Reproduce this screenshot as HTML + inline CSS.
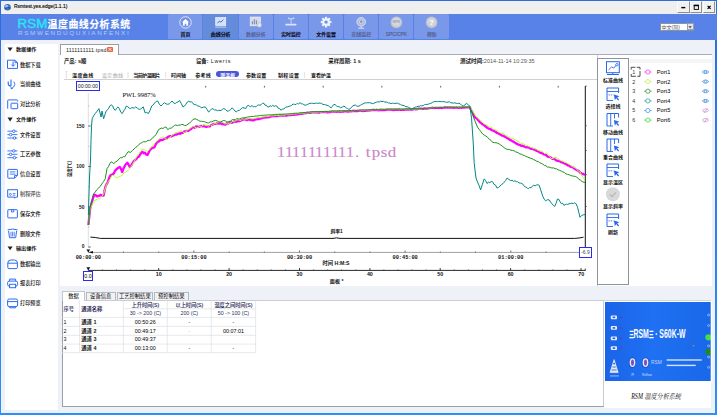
<!DOCTYPE html>
<html lang="zh-CN"><head><meta charset="utf-8"><title>RSM温度曲线分析系统</title>
<style>
html,body{margin:0;padding:0}
body{width:717px;height:415px;overflow:hidden;position:relative;background:#eef2f8;font-family:"Liberation Sans","Noto Sans CJK SC",sans-serif;}
.t{position:absolute;white-space:nowrap;}
svg{position:absolute;left:0;top:0;overflow:visible}
</style></head><body>

<div style="position:absolute;left:0px;top:0px;width:717px;height:415px;background:linear-gradient(180deg,#2a6be0,#2c7cec 40%,#2b90f8);"></div>
<div style="position:absolute;left:1.1px;top:1px;width:714.3px;height:412.3px;background:#eef2f8;"></div>
<div style="position:absolute;left:1.1px;top:412.7px;width:714.3px;height:0.6px;background:#fafcff;"></div>
<div style="position:absolute;left:1.1px;top:1px;width:714.9px;height:12.8px;background:#efefef;"></div>
<svg width="717" height="415" viewBox="0 0 717 415"><circle cx="7.5" cy="7.3" r="3.3" fill="#3d6fc4"/><circle cx="6.6" cy="6.3" r="1.6" fill="#9cc3ee"/><path d="M4.6 8.6 Q7.5 6.5 10.6 8.2" stroke="#1d3f7a" stroke-width=".8" fill="none"/></svg>
<div class="t" style="left:14px;top:3.4px;font-size:4.9px;line-height:8px;color:#000;font-weight:normal;-webkit-text-stroke:.12px #000;">Rsmtest.yes.edge(1.1.1)</div>
<div style="position:absolute;left:677.2px;top:1px;width:12.4px;height:12.3px;background:#f1f1f1;border:0.6px solid;border-color:#fbfbfb #8e8e8e #8e8e8e #fbfbfb;box-sizing:border-box;"></div>
<div style="position:absolute;left:690px;top:1px;width:12.4px;height:12.3px;background:#f1f1f1;border:0.6px solid;border-color:#fbfbfb #8e8e8e #8e8e8e #fbfbfb;box-sizing:border-box;"></div>
<div style="position:absolute;left:702.8px;top:1px;width:12.6px;height:12.3px;background:#f1f1f1;border:0.6px solid;border-color:#fbfbfb #8e8e8e #8e8e8e #fbfbfb;box-sizing:border-box;"></div>
<svg width="717" height="415" viewBox="0 0 717 415"><rect x="681.3" y="6.9" width="4" height="1.4" fill="#000"/><rect x="694.2" y="5.4" width="4.2" height="4" fill="none" stroke="#000" stroke-width=".9"/><rect x="693.75" y="4.7" width="5.1" height="1.5" fill="#000"/><path d="M707.6 5.8l3 3M710.6 5.8l-3 3" stroke="#000" stroke-width="1.2"/></svg>
<div style="position:absolute;left:1.1px;top:13.8px;width:715.9px;height:25.9px;background:#5882e8;"></div>
<div class="t" style="left:17.4px;top:18.1px;font-size:13.3px;line-height:12px;color:#27e6f7;font-weight:normal;letter-spacing:0.15px;-webkit-text-stroke:.4px #27e6f7;">RSM</div>
<div class="t" style="left:47.6px;top:18.5px;font-size:9.9px;line-height:12px;color:#fff;font-weight:bold;letter-spacing:0.52px;-webkit-text-stroke:.15px #fff;">温度曲线分析系统</div>
<div class="t" style="left:18.4px;top:29.9px;font-size:5px;line-height:6px;color:#b4caf6;font-weight:normal;letter-spacing:1.35px;transform:scaleX(1.255);transform-origin:0 50%;">RSMWENDUQUXIANFENXI</div>
<div style="position:absolute;left:168.3px;top:14.4px;width:34.2px;height:25px;background:#7a98e9;border-radius:1.6px;"></div>
<div class="t" style="left:185.5px;width:0;display:flex;justify-content:center;top:30.6px;font-size:4.9px;line-height:8px;color:#05050f;font-weight:normal;-webkit-text-stroke:.2px #05050f;"><span style="white-space:nowrap;flex:none">首页</span></div>
<div style="position:absolute;left:203.45px;top:14.4px;width:34.2px;height:25px;background:#648cda;border-radius:1.6px;"></div>
<div class="t" style="left:220.65px;width:0;display:flex;justify-content:center;top:30.6px;font-size:4.9px;line-height:8px;color:#05050f;font-weight:normal;-webkit-text-stroke:.2px #05050f;"><span style="white-space:nowrap;flex:none">曲线分析</span></div>
<div style="position:absolute;left:238.6px;top:14.4px;width:34.2px;height:25px;background:#7a98e9;border-radius:1.6px;"></div>
<div class="t" style="left:255.8px;width:0;display:flex;justify-content:center;top:30.6px;font-size:4.9px;line-height:8px;color:#505c8c;font-weight:normal;-webkit-text-stroke:.15px #505c8c;"><span style="white-space:nowrap;flex:none">数据分析</span></div>
<div style="position:absolute;left:273.75px;top:14.4px;width:34.2px;height:25px;background:#7a98e9;border-radius:1.6px;"></div>
<div class="t" style="left:290.95px;width:0;display:flex;justify-content:center;top:30.6px;font-size:4.9px;line-height:8px;color:#05050f;font-weight:normal;-webkit-text-stroke:.2px #05050f;"><span style="white-space:nowrap;flex:none">实时监控</span></div>
<div style="position:absolute;left:308.9px;top:14.4px;width:34.2px;height:25px;background:#7a98e9;border-radius:1.6px;"></div>
<div class="t" style="left:326.1px;width:0;display:flex;justify-content:center;top:30.6px;font-size:4.9px;line-height:8px;color:#05050f;font-weight:normal;-webkit-text-stroke:.2px #05050f;"><span style="white-space:nowrap;flex:none">文件设置</span></div>
<div style="position:absolute;left:344.05px;top:14.4px;width:34.2px;height:25px;background:#7a98e9;border-radius:1.6px;"></div>
<div class="t" style="left:361.25px;width:0;display:flex;justify-content:center;top:30.6px;font-size:4.9px;line-height:8px;color:#505c8c;font-weight:normal;-webkit-text-stroke:.15px #505c8c;"><span style="white-space:nowrap;flex:none">在线监控</span></div>
<div style="position:absolute;left:379.2px;top:14.4px;width:34.2px;height:25px;background:#7a98e9;border-radius:1.6px;"></div>
<div class="t" style="left:396.4px;width:0;display:flex;justify-content:center;top:30.6px;font-size:4.9px;line-height:8px;color:#505c8c;font-weight:normal;-webkit-text-stroke:.15px #505c8c;"><span style="white-space:nowrap;flex:none">SPC/CPK</span></div>
<div style="position:absolute;left:414.35px;top:14.4px;width:34.2px;height:25px;background:#7a98e9;border-radius:1.6px;"></div>
<div class="t" style="left:431.55px;width:0;display:flex;justify-content:center;top:30.6px;font-size:4.9px;line-height:8px;color:#505c8c;font-weight:normal;-webkit-text-stroke:.15px #505c8c;"><span style="white-space:nowrap;flex:none">帮助</span></div>
<svg width="717" height="415" viewBox="0 0 717 415"><circle cx="185.5" cy="22.4" r="5.7" fill="#7190e6" stroke="#fff" stroke-width=".75"/><path d="M182 22.3l3.5-3.2 3.5 3.2h-.9v3.4h-1.8v-2h-1.6v2h-1.8v-3.4z" fill="#fff"/><rect x="215.7" y="17.6" width="10" height="7.8" fill="#d3e2fb" stroke="#eef3fd" stroke-width=".7"/><path d="M217.5 23.2l1.8-2 1.6 1 2.4-2.6" stroke="#3a5fb4" stroke-width=".9" fill="none"/><rect x="215.2" y="26.7" width="10.8" height=".7" fill="#f2f6fd"/><rect x="250.2" y="17" width="10.4" height="8.8" fill="#d6dceb" stroke="#e6ebf5" stroke-width=".7"/><path d="M252.4 24.2v-3M254.4 24.2v-5M256.4 24.2v-4" stroke="#7f8cab" stroke-width="1.1"/><circle cx="259.4" cy="25" r="2.3" fill="#dfe4ef" stroke="#a3adc6" stroke-width=".5"/><path d="M286.1 24.6h9.6" stroke="#dbe4f8" stroke-width="1.7" stroke-linecap="round"/><path d="M291.1 23.6v-5M288.9 18.8h4.4" stroke="#dbe4f8" stroke-width=".8" fill="none"/><circle cx="288.8" cy="18.3" r=".8" fill="#dbe4f8"/><circle cx="293.6" cy="18.3" r=".8" fill="#dbe4f8"/><g transform="translate(326.1 22.1)"><rect x="-1.05" y="-5.3" width="2.1" height="3" fill="#eef3fd" transform="rotate(0)"/><rect x="-1.05" y="-5.3" width="2.1" height="3" fill="#eef3fd" transform="rotate(45)"/><rect x="-1.05" y="-5.3" width="2.1" height="3" fill="#eef3fd" transform="rotate(90)"/><rect x="-1.05" y="-5.3" width="2.1" height="3" fill="#eef3fd" transform="rotate(135)"/><rect x="-1.05" y="-5.3" width="2.1" height="3" fill="#eef3fd" transform="rotate(180)"/><rect x="-1.05" y="-5.3" width="2.1" height="3" fill="#eef3fd" transform="rotate(225)"/><rect x="-1.05" y="-5.3" width="2.1" height="3" fill="#eef3fd" transform="rotate(270)"/><rect x="-1.05" y="-5.3" width="2.1" height="3" fill="#eef3fd" transform="rotate(315)"/><circle r="3.8" fill="#eef3fd"/><circle r="1.7" fill="#6f8fe4"/></g><circle cx="361.2" cy="21.8" r="4.3" fill="#aebbdc" stroke="#dde4f2" stroke-width=".9"/><circle cx="361.2" cy="21.6" r="1.9" fill="#8d9cc4" stroke="#dfe5f2" stroke-width=".7"/><path d="M361.2 26.2v1.6M358.2 28.2h6" stroke="#dde4f2" stroke-width="1"/><circle cx="396.4" cy="22.4" r="5.8" fill="#bfc4cf"/><circle cx="396.4" cy="22" r="4.6" fill="#d3d6dd"/><circle cx="431.6" cy="22.4" r="5.8" fill="#bcc1cc"/><circle cx="431.6" cy="22.1" r="4.7" fill="#cfd2da"/></svg>
<div class="t" style="left:396.4px;width:0;display:flex;justify-content:center;top:20.1px;font-size:3.8px;line-height:5px;color:#9aa0ad;font-weight:bold;"><span style="white-space:nowrap;flex:none">SPK</span></div>
<div class="t" style="left:431.55px;width:0;display:flex;justify-content:center;top:18.9px;font-size:7.5px;line-height:8px;color:#fff;font-weight:bold;"><span style="white-space:nowrap;flex:none">?</span></div>
<div style="position:absolute;left:659.6px;top:22.6px;width:34.8px;height:8.6px;background:#fff;border:0.6px solid #8a93a5;box-sizing:border-box;"></div>
<div style="position:absolute;left:686.6px;top:23.4px;width:7px;height:7px;background:#e4e6ea;border:0.5px solid #9aa0aa;box-sizing:border-box;"></div>
<div class="t" style="left:661.5px;top:23px;font-size:5px;line-height:8px;color:#555;font-weight:normal;">中文(简)</div>
<svg width="717" height="415" viewBox="0 0 717 415"><path d="M688.4 26.2h3.4l-1.7 2z" fill="#444"/></svg>
<div style="position:absolute;left:4.8px;top:43.7px;width:53.5px;height:366.3px;background:#fff;"></div>
<svg width="717" height="415" viewBox="0 0 717 415"><path d="M7.5 47.5h5.2l-2.6 3.8z" fill="#222"/><g transform="translate(6.8 59.3)"><path d="M.7 .9h7.5l2.5 2.5v5.7H.7z M8.2 .9v2.5h2.5" fill="none" stroke="#2c6cf0" stroke-width="1"/><path d="M6.3 2.2v4.6M4.5 5.2l1.8 1.8 1.8-1.8" fill="none" stroke="#2c6cf0" stroke-width="1"/></g><g transform="translate(6.8 79.2)"><path d="M4.2 .4v6.4M1.4 2.4v2q0 2.6 2.8 2.6" fill="none" stroke="#2c6cf0" stroke-width="1.1"/><path d="M7 2.4q2.4 2.6-.2 5.4l-2.4 1.6M4.4 7.8l-.2 1.7 1.8-.1" fill="none" stroke="#2c6cf0" stroke-width=".9"/></g><g transform="translate(6.8 99)"><path d="M.9 9.7V1.7q0-.8.8-.8h8.4q.8 0 .8.8v.8" fill="none" stroke="#2c6cf0" stroke-width="1"/><rect x="4.2" y="4.2" width="6.7" height="5.5" rx=".6" fill="none" stroke="#2c6cf0" stroke-width="1"/></g><path d="M7.5 117.6h5.2l-2.6 3.8z" fill="#222"/><g transform="translate(6.8 129.4)"><path d="M.6 1.8h10M.6 5.2h10M.6 8.6h10" stroke="#2c6cf0" stroke-width=".9"/><circle cx="7" cy="1.8" r="1.3" fill="#fff" stroke="#2c6cf0" stroke-width=".9"/><circle cx="3.8" cy="5.2" r="1.3" fill="#fff" stroke="#2c6cf0" stroke-width=".9"/><circle cx="7.6" cy="8.6" r="1.3" fill="#fff" stroke="#2c6cf0" stroke-width=".9"/></g><g transform="translate(6.8 149.1)"><path d="M.6 1.8h10M.6 5.2h10M.6 8.6h10" stroke="#2c6cf0" stroke-width=".9"/><circle cx="7" cy="1.8" r="1.3" fill="#fff" stroke="#2c6cf0" stroke-width=".9"/><circle cx="3.8" cy="5.2" r="1.3" fill="#fff" stroke="#2c6cf0" stroke-width=".9"/><circle cx="7.6" cy="8.6" r="1.3" fill="#fff" stroke="#2c6cf0" stroke-width=".9"/></g><g transform="translate(6.8 168.6)"><path d="M1 1.4q0-.6.6-.6h8.4q.6 0 .6.6v5.4l-2.8 2.8H1.6q-.6 0-.6-.6z M10.6 6.8h-2.8v2.8" fill="none" stroke="#2c6cf0" stroke-width="1"/><path d="M3 3.3h5.6M3 5.5h5.6" stroke="#2c6cf0" stroke-width=".9"/></g><g transform="translate(6.8 188.6)"><path d="M.9 1.1h9.8v7.4h-1.6l-1.2 1.1v-1.1H.9z" fill="none" stroke="#2c6cf0" stroke-width="1"/><circle cx="3.6" cy="5.8" r="1" fill="none" stroke="#2c6cf0" stroke-width=".8"/><path d="M6 5h2.6M6 6.6h2.6" stroke="#2c6cf0" stroke-width=".8"/></g><g transform="translate(6.8 208.5)"><rect x="1" y="1.2" width="9.6" height="8.2" rx=".5" fill="none" stroke="#2c6cf0" stroke-width="1"/><rect x="4.6" y="1.2" width="2.4" height="2.2" fill="none" stroke="#2c6cf0" stroke-width=".8"/></g><g transform="translate(6.8 228.3)"><path d="M.8 1.6q5-1.6 10 0" fill="none" stroke="#2c6cf0" stroke-width="1"/><path d="M1.8 2.6l.9 6.8h6.2l.9-6.8" fill="none" stroke="#2c6cf0" stroke-width="1"/><path d="M4.2 3.4v4.8M5.8 3.4v4.8M7.4 3.4v4.8" stroke="#2c6cf0" stroke-width=".8"/></g><path d="M7.5 246.5h5.2l-2.6 3.8z" fill="#222"/><g transform="translate(6.8 259)"><path d="M1 4q0-3 3-3h3.6q3 0 3 3v4.4q0 1.2-1.2 1.2H2.2q-1.2 0-1.2-1.2z" fill="none" stroke="#2c6cf0" stroke-width="1"/><path d="M1 4.2h9.6" stroke="#2c6cf0" stroke-width="1"/></g><g transform="translate(6.8 278.1)"><path d="M2.8 3V1h6v2" fill="none" stroke="#2c6cf0" stroke-width="1"/><rect x=".8" y="3" width="10" height="5" rx="1.6" fill="none" stroke="#2c6cf0" stroke-width="1"/><rect x="2.8" y="6.2" width="6" height="3.4" fill="#fff" stroke="#2c6cf0" stroke-width="1"/></g><g transform="translate(6.8 297.6)"><rect x=".8" y="1.4" width="10" height="7.6" rx="1.6" fill="none" stroke="#2c6cf0" stroke-width="1"/><path d="M.8 4h10" stroke="#2c6cf0" stroke-width="1"/><path d="M2.8 9v1.2h6V9" fill="none" stroke="#2c6cf0" stroke-width="1"/></g></svg>
<div class="t" style="left:16px;top:45.3px;font-size:5.1px;line-height:8px;color:#111;font-weight:bold;">数据操作</div>
<div class="t" style="left:20px;top:60.5px;font-size:5.15px;line-height:8px;color:#000;font-weight:normal;-webkit-text-stroke:.07px #000;">数据下载</div>
<div class="t" style="left:20px;top:80.4px;font-size:5.15px;line-height:8px;color:#000;font-weight:normal;-webkit-text-stroke:.07px #000;">当前曲线</div>
<div class="t" style="left:20px;top:100.2px;font-size:5.15px;line-height:8px;color:#000;font-weight:normal;-webkit-text-stroke:.07px #000;">对比分析</div>
<div class="t" style="left:16px;top:115.4px;font-size:5.1px;line-height:8px;color:#111;font-weight:bold;">文件操作</div>
<div class="t" style="left:20px;top:130.6px;font-size:5.15px;line-height:8px;color:#000;font-weight:normal;-webkit-text-stroke:.07px #000;">文件设置</div>
<div class="t" style="left:20px;top:150.3px;font-size:5.15px;line-height:8px;color:#000;font-weight:normal;-webkit-text-stroke:.07px #000;">工艺参数</div>
<div class="t" style="left:20px;top:169.8px;font-size:5.15px;line-height:8px;color:#000;font-weight:normal;-webkit-text-stroke:.07px #000;">信息设置</div>
<div class="t" style="left:20px;top:189.8px;font-size:5.15px;line-height:8px;color:#666;font-weight:normal;-webkit-text-stroke:.07px #000;">制程评估</div>
<div class="t" style="left:20px;top:209.7px;font-size:5.15px;line-height:8px;color:#000;font-weight:normal;-webkit-text-stroke:.07px #000;">保存文件</div>
<div class="t" style="left:20px;top:229.5px;font-size:5.15px;line-height:8px;color:#000;font-weight:normal;-webkit-text-stroke:.07px #000;">删除文件</div>
<div class="t" style="left:16px;top:244.3px;font-size:5.1px;line-height:8px;color:#111;font-weight:bold;">输出操作</div>
<div class="t" style="left:20px;top:260.2px;font-size:5.15px;line-height:8px;color:#000;font-weight:normal;-webkit-text-stroke:.07px #000;">数据输出</div>
<div class="t" style="left:20px;top:279.3px;font-size:5.15px;line-height:8px;color:#000;font-weight:normal;-webkit-text-stroke:.07px #000;">报表打印</div>
<div class="t" style="left:20px;top:298.8px;font-size:5.15px;line-height:8px;color:#000;font-weight:normal;-webkit-text-stroke:.07px #000;">打印预览</div>
<div style="position:absolute;left:60px;top:54.4px;width:652px;height:0.8px;background:#a9adb5;"></div>
<div style="position:absolute;left:60px;top:44.2px;width:58.8px;height:11px;background:#fff;border:0.7px solid #9a9ea6;border-bottom:none;box-sizing:border-box;"></div>
<div class="t" style="left:66px;top:45.6px;font-size:5.3px;line-height:8px;color:#222;font-weight:normal;letter-spacing:0.22px;">1111111111.tpsd</div>
<div style="position:absolute;left:107.3px;top:46.8px;width:5.4px;height:5.4px;background:#e9663f;border-radius:.8px;"></div>
<svg width="717" height="415" viewBox="0 0 717 415"><path d="M108.6 48.1l2.8 2.8M111.4 48.1l-2.8 2.8" stroke="#fff" stroke-width=".9"/></svg>
<div style="position:absolute;left:60px;top:55.2px;width:537.3px;height:231.3px;background:#fff;"></div>
<div style="position:absolute;left:597px;top:55.2px;width:0.7px;height:231.3px;background:#c9cdd4;"></div>
<div class="t" style="left:63.9px;top:57.3px;font-size:5.4px;line-height:8px;color:#111;font-weight:bold;">产品: s顺</div>
<div class="t" style="left:195.9px;top:57.3px;font-size:5.4px;line-height:8px;color:#111;font-weight:bold;">设备:<span style="font-weight:normal;letter-spacing:.75px;color:#222"> Lwerts</span></div>
<div class="t" style="left:328.3px;top:57.3px;font-size:5.4px;line-height:8px;color:#111;font-weight:bold;">采样周期: 1 s</div>
<div class="t" style="left:460px;top:57.3px;font-size:5.5px;line-height:8px;color:#555;font-weight:normal;"><b style="color:#111">测试时间:</b>2014-11-14 10:29:35</div>
<div class="t" style="left:72px;top:70.9px;font-size:5px;line-height:8px;color:#111;font-weight:bold;letter-spacing:0.43px;">温度曲线</div>
<div class="t" style="left:102px;top:70.9px;font-size:5px;line-height:8px;color:#a5a5a5;font-weight:normal;letter-spacing:0.37px;">设定曲线</div>
<div class="t" style="left:133.3px;top:70.9px;font-size:5px;line-height:8px;color:#111;font-weight:bold;letter-spacing:-0.6px;">当前炉温图片</div>
<div class="t" style="left:171px;top:70.9px;font-size:5px;line-height:8px;color:#111;font-weight:bold;letter-spacing:0px;">时间轴</div>
<div class="t" style="left:195.2px;top:70.9px;font-size:5px;line-height:8px;color:#111;font-weight:bold;letter-spacing:0.32px;">参考线</div>
<div class="t" style="left:246px;top:70.9px;font-size:5px;line-height:8px;color:#111;font-weight:bold;letter-spacing:0.11px;">参数设置</div>
<div class="t" style="left:277.9px;top:70.9px;font-size:5px;line-height:8px;color:#111;font-weight:bold;letter-spacing:0.37px;">制程设置</div>
<div class="t" style="left:311px;top:70.9px;font-size:5px;line-height:8px;color:#111;font-weight:bold;letter-spacing:-0.11px;">查看炉温</div>
<div style="position:absolute;left:216.2px;top:71.4px;width:23px;height:6.1px;background:#4a55d8;border-radius:3.1px;"></div>
<div class="t" style="left:227.7px;width:0;display:flex;justify-content:center;top:70.9px;font-size:5px;line-height:8px;color:#fff;font-weight:bold;letter-spacing:.2px;"><span style="white-space:nowrap;flex:none">测温板</span></div>
<svg width="717" height="415" viewBox="0 0 717 415"><path d="M66.4 71v7.4" stroke="#9a9a9a" stroke-width=".7" stroke-dasharray=".7 .9"/><path d="M128 72v6" stroke="#cfcfcf" stroke-width=".6"/><path d="M165.7 72v6" stroke="#cfcfcf" stroke-width=".6"/><path d="M304.6 72v6" stroke="#cfcfcf" stroke-width=".6"/><path d="M64 79.5H597" stroke="#bdbdbd" stroke-width=".7"/></svg>
<div style="position:absolute;left:76px;top:81px;width:23.7px;height:10px;background:#fff;border:0.8px solid #2a2af0;box-sizing:border-box;"></div>
<div class="t" style="left:87.85px;width:0;display:flex;justify-content:center;top:82.1px;font-size:5.2px;line-height:8px;color:#222;font-weight:normal;"><span style="white-space:nowrap;flex:none">00:00:00</span></div>
<div class="t" style="left:122.5px;top:91px;font-size:6.45px;line-height:8px;color:#000;font-weight:normal;font-family:'Liberation Serif',serif;">PWL 9987%</div>
<div class="t" style="left:0;top:144.9px;height:16px;font-size:14px;line-height:16px;color:#c986ca;-webkit-text-stroke:.15px #c986ca;font-family:'Liberation Serif',serif;"><span style="position:absolute;left:275.8px;width:10px;text-align:center;transform:scaleX(1.15)">1</span><span style="position:absolute;left:283.5px;width:10px;text-align:center;transform:scaleX(1.15)">1</span><span style="position:absolute;left:291.2px;width:10px;text-align:center;transform:scaleX(1.15)">1</span><span style="position:absolute;left:298.9px;width:10px;text-align:center;transform:scaleX(1.15)">1</span><span style="position:absolute;left:306.6px;width:10px;text-align:center;transform:scaleX(1.15)">1</span><span style="position:absolute;left:314.3px;width:10px;text-align:center;transform:scaleX(1.15)">1</span><span style="position:absolute;left:322px;width:10px;text-align:center;transform:scaleX(1.15)">1</span><span style="position:absolute;left:329.7px;width:10px;text-align:center;transform:scaleX(1.15)">1</span><span style="position:absolute;left:337.4px;width:10px;text-align:center;transform:scaleX(1.15)">1</span><span style="position:absolute;left:345.1px;width:10px;text-align:center;transform:scaleX(1.15)">1</span><span style="position:absolute;left:352.3px;width:10px;text-align:center;transform:scaleX(1.15)">.</span><span style="position:absolute;left:362.9px;width:10px;text-align:center;transform:scaleX(1.2)">t</span><span style="position:absolute;left:371.3px;width:10px;text-align:center;transform:scaleX(1.2)">p</span><span style="position:absolute;left:378.8px;width:10px;text-align:center;transform:scaleX(1.2)">s</span><span style="position:absolute;left:387px;width:10px;text-align:center;transform:scaleX(1.2)">d</span></div>
<svg width="717" height="415" viewBox="0 0 717 415" fill="none"><path d="M88.3 93V247.5" stroke="#c8c8c8" stroke-width=".6"/><path d="M88.3 126h2.4" stroke="#333" stroke-width=".8"/><path d="M88.3 166.5h2.4" stroke="#333" stroke-width=".8"/><path d="M88.3 207h2.4" stroke="#333" stroke-width=".8"/><path d="M88.3 247h2.4" stroke="#333" stroke-width=".8"/><path d="M88.3 106h1.2" stroke="#999" stroke-width=".6"/><path d="M88.3 146.3h1.2" stroke="#999" stroke-width=".6"/><path d="M88.3 186.8h1.2" stroke="#999" stroke-width=".6"/><path d="M88.3 227h1.2" stroke="#999" stroke-width=".6"/><path d="M205.7 85.8v1.8" stroke="#222" stroke-width=".7"/><path d="M264.4 85.8v1.8" stroke="#222" stroke-width=".7"/><path d="M323.2 85.8v1.8" stroke="#222" stroke-width=".7"/><path d="M381.9 85.8v1.8" stroke="#222" stroke-width=".7"/><path d="M440.7 85.8v1.8" stroke="#222" stroke-width=".7"/><path d="M499.4 85.8v1.8" stroke="#222" stroke-width=".7"/><path d="M558.2 85.8v1.8" stroke="#222" stroke-width=".7"/><path d="M585.3 86V247.5" stroke="#111" stroke-width="1"/><path d="M585.3 86h1.6" stroke="#333" stroke-width=".6"/><path d="M585.3 125.7h1.6" stroke="#333" stroke-width=".6"/><path d="M585.3 150.5h1.6" stroke="#333" stroke-width=".6"/><path d="M585.3 174.6h1.6" stroke="#333" stroke-width=".6"/><path d="M585.3 206.5h1.6" stroke="#333" stroke-width=".6"/><path d="M90.4 237.1Q95 237.3 100.5 238.4H333Q336.5 237.3 340 238.4H574.5Q579 238.2 583.5 237.2" stroke="#111" stroke-width="1"/><path d="M88.3 252.4H585" stroke="#777" stroke-width=".7"/><path d="M88.3 250.5v1.9" stroke="#333" stroke-width=".7"/><path d="M123.5 251.5v1" stroke="#333" stroke-width=".7"/><path d="M158.8 251.5v1" stroke="#333" stroke-width=".7"/><path d="M193.9 250.5v1.9" stroke="#333" stroke-width=".7"/><path d="M229.2 251.5v1" stroke="#333" stroke-width=".7"/><path d="M264.4 251.5v1" stroke="#333" stroke-width=".7"/><path d="M299.5 250.5v1.9" stroke="#333" stroke-width=".7"/><path d="M334.8 251.5v1" stroke="#333" stroke-width=".7"/><path d="M370 251.5v1" stroke="#333" stroke-width=".7"/><path d="M405.1 250.5v1.9" stroke="#333" stroke-width=".7"/><path d="M440.4 251.5v1" stroke="#333" stroke-width=".7"/><path d="M475.5 251.5v1" stroke="#333" stroke-width=".7"/><path d="M510.8 250.5v1.9" stroke="#333" stroke-width=".7"/><path d="M546 251.5v1" stroke="#333" stroke-width=".7"/><path d="M581.1 251.5v1" stroke="#333" stroke-width=".7"/><path d="M86.4 249.6l1.9 2.6 1.9-2.6z M88.5 252.3l4.5-1.3v2.6z" fill="#111"/><path d="M88.3 270.4H585.6" stroke="#111" stroke-width=".9"/><path d="M88.3 268v2.4" stroke="#111" stroke-width=".8"/><path d="M102.4 269.3v1.1" stroke="#333" stroke-width=".6"/><path d="M116.5 269.3v1.1" stroke="#333" stroke-width=".6"/><path d="M130.6 269.3v1.1" stroke="#333" stroke-width=".6"/><path d="M144.7 269.3v1.1" stroke="#333" stroke-width=".6"/><path d="M158.7 268v2.4" stroke="#111" stroke-width=".8"/><path d="M172.8 269.3v1.1" stroke="#333" stroke-width=".6"/><path d="M186.9 269.3v1.1" stroke="#333" stroke-width=".6"/><path d="M201 269.3v1.1" stroke="#333" stroke-width=".6"/><path d="M215 269.3v1.1" stroke="#333" stroke-width=".6"/><path d="M229.1 268v2.4" stroke="#111" stroke-width=".8"/><path d="M243.2 269.3v1.1" stroke="#333" stroke-width=".6"/><path d="M257.3 269.3v1.1" stroke="#333" stroke-width=".6"/><path d="M271.3 269.3v1.1" stroke="#333" stroke-width=".6"/><path d="M285.4 269.3v1.1" stroke="#333" stroke-width=".6"/><path d="M299.5 268v2.4" stroke="#111" stroke-width=".8"/><path d="M313.6 269.3v1.1" stroke="#333" stroke-width=".6"/><path d="M327.6 269.3v1.1" stroke="#333" stroke-width=".6"/><path d="M341.7 269.3v1.1" stroke="#333" stroke-width=".6"/><path d="M355.8 269.3v1.1" stroke="#333" stroke-width=".6"/><path d="M369.9 268v2.4" stroke="#111" stroke-width=".8"/><path d="M383.9 269.3v1.1" stroke="#333" stroke-width=".6"/><path d="M398 269.3v1.1" stroke="#333" stroke-width=".6"/><path d="M412.1 269.3v1.1" stroke="#333" stroke-width=".6"/><path d="M426.2 269.3v1.1" stroke="#333" stroke-width=".6"/><path d="M440.2 268v2.4" stroke="#111" stroke-width=".8"/><path d="M454.3 269.3v1.1" stroke="#333" stroke-width=".6"/><path d="M468.4 269.3v1.1" stroke="#333" stroke-width=".6"/><path d="M482.5 269.3v1.1" stroke="#333" stroke-width=".6"/><path d="M496.6 269.3v1.1" stroke="#333" stroke-width=".6"/><path d="M510.6 268v2.4" stroke="#111" stroke-width=".8"/><path d="M524.7 269.3v1.1" stroke="#333" stroke-width=".6"/><path d="M538.8 269.3v1.1" stroke="#333" stroke-width=".6"/><path d="M552.9 269.3v1.1" stroke="#333" stroke-width=".6"/><path d="M566.9 269.3v1.1" stroke="#333" stroke-width=".6"/><path d="M581 268v2.4" stroke="#111" stroke-width=".8"/><path d="M585.3 268.6v1.8" stroke="#111" stroke-width=".8"/><path d="M86.4 267.2l1.9 3 1.9-3z" fill="#111"/><polyline points="88.4,225 90.1,209 91.8,202.3 93,198.5 94.3,194.7 95.6,195 96.9,196.4 98.2,196.2 99.4,195.6 100.8,194.9 102.2,195.7 103.6,195.6 105.3,187.1 106.5,184.4 107.8,182.1 109.1,178 110.4,175.3 112.1,174.5 113.8,173.6 115,170.8 116.3,169.4 118,168 119.7,166.9 121,168.8 122.2,172 123.9,167.7 125.6,164.5 127.3,162.7 128.6,164.7 129.8,166.9 131.1,165.7 132.3,163.5 133.6,161.4 134.9,160.1 136.1,159.3 137.4,157.6 138.7,156.8 139.9,154.8 141.2,153 142.4,151.7 143.7,153.3 144.9,152.6 146.2,154.7 147.5,155 148.8,152.2 150,150 151.4,148.6 152.9,147.7 154.3,147.4 155.9,144.1 157.6,141.5 159,141.5 160.3,140 161.7,140.1 163,139.7 164.4,139 165.6,138.3 166.8,138.1 168,136.8 169.2,136.4 170.4,136.1 171.6,136.4 172.8,135.6 174,135.1 175.2,134.6 176.4,134.6 177.7,134 178.9,133.4 180.1,133.8 181.3,133 182.7,132.8 184.1,131.5 185.5,131.5 186.9,130.8 188.3,130.9 189.7,129.7 190.9,129.2 192.2,127.7 193.4,127.2 194.7,127.8 196.1,126.3 197.4,126.6 198.8,127 200.1,126.4 201.3,125.8 202.5,126.4 203.7,125.7 205,126.7 206.2,126.8 207.4,126.5 208.6,126.4 209.8,126.4 211.1,124.8 212.3,124.8 213.6,123.8 215,123.8 216.3,123.6 217.7,123.2 219,123.7 220.4,123 221.7,124.1 222.9,123.8 224.2,124.5 225.4,124.7 226.7,123.3 227.9,123.7 229.2,123 230.5,122.1 231.7,122.8 232.9,122.4 234.1,121.4 235.3,121.5 236.5,121.8 237.7,120.7 238.9,121.3 240.3,120.9 241.6,120.1 243,119.7 244.3,119.2 245.7,119.6 247,120.2 248.4,119.3 249.7,119.7 251.1,120.2 252.4,120.4 253.7,120.3 255,119.5 256.2,119.4 257.5,119.2 258.8,119.1 260.1,118.7 261.3,118.4 262.6,117.9 263.9,117.6 265.2,117.5 266.5,117.2 267.8,117.4 269.2,117.2 270.5,116.6 271.8,116.4 273.1,116.2 274.4,116.2 275.6,116 276.8,116 278,116 279.2,115.7 280.4,115.5 281.6,115.6 282.9,115.5 284.1,115.6 285.3,115.7 286.5,115.5 287.7,115.3 288.9,115.2 290.1,115.2 291.3,115 292.5,114.6 293.8,114.9 295,114.7 296.3,114.6 297.5,114.4 298.8,114.1 300,113.9 301.3,113.6 302.5,113.8 303.8,113.3 305,113.1 306.3,113.1 307.5,112.9 308.8,112.9 310,112.8 311.2,112.5 312.4,112.4 313.6,112.4 314.8,112.4 316.1,112.5 317.3,112.2 318.5,112.7 319.7,112.5 320.9,112.2 322.1,112.2 323.3,112.2 324.5,112.1 325.8,111.9 327,112.3 328.2,112.4 329.4,112 330.6,112 331.8,111.7 333,111.6 334.2,111.7 335.5,111.6 336.7,111.9 337.9,111.5 339.1,111.4 340.3,111.9 341.5,111.6 342.7,111.3 343.9,111.5 345.2,111.1 346.4,111.4 347.6,111.6 348.8,111.5 350,111.2 351.2,111.3 352.4,111 353.6,111 354.8,110.8 356,111.1 357.2,110.9 358.4,111 359.6,110.7 360.8,110.6 362,110.9 363.2,111 364.4,110.8 365.6,110.8 366.8,110.7 368,110.6 369.2,110.3 370.4,110.4 371.6,110.2 372.8,110 374,110 375.2,110.1 376.4,110 377.6,110.2 378.8,110.3 380,110 381.2,109.9 382.4,110.2 383.6,110.2 384.8,110.2 386,109.8 387.2,109.7 388.4,109.7 389.6,109.7 390.8,109.6 392,109.9 393.2,110 394.4,110 395.6,109.7 396.8,109.8 398,109.9 399.2,109.4 400.4,109.8 401.6,109.9 402.8,109.8 404,109.8 405.2,109.6 406.4,109.4 407.6,109.7 408.8,109.4 410,109.5 411.2,109.6 412.4,109.6 413.6,109.2 414.8,109.1 416,109.4 417.2,109.1 418.4,108.7 419.6,108.6 420.8,108.6 422,108.9 423.3,108.8 424.5,108.3 425.7,108.6 426.9,108.7 428.1,108.4 429.3,108.1 430.5,108.2 431.7,107.8 432.9,107.7 434.1,108.2 435.3,107.8 436.5,107.9 437.8,107.8 439,108 440.2,107.7 441.5,108 442.7,107.9 443.9,107.5 445.2,107.5 446.4,107.5 447.7,107.5 448.9,107.7 450.1,107.5 451.4,107.6 452.6,107.4 453.8,107.8 455.1,107.5 456.3,107.5 457.5,107.6 458.8,107.8 460,107.5 461.2,107.8 462.5,107.5 463.7,107.5 465,107.5 466.2,107.2 467.4,107.4 468.7,107.2 469.9,107.4 470.8,109.5 472.5,112.4 474.1,116.2 475.5,117.8 476.8,118.6 478.2,120.3 479.5,121.8 480.9,123 482.2,124.1 483.6,124.8 484.9,126 486.3,127 487.6,128 489,128.9 490.3,129 491.7,130.1 493,130.5 494.4,131.4 495.7,131.8 496.9,132.9 498.2,133.3 499.4,134 500.7,134.8 502,135.6 503.2,135.8 504.5,136.5 505.8,137.3 507,138 508.3,138.7 509.6,139.6 510.8,140.1 512.1,141 513.3,141.6 514.6,142.4 515.9,143.4 517.2,143.9 518.6,144.7 519.9,145 521.2,145.8 522.4,145.6 523.7,146.3 525,147 526.2,147.4 527.5,147.1 528.7,147.5 530,148.3 531.4,148.8 532.7,148.9 534.1,149.6 535.5,150 536.8,151 538.2,151.4 539.5,152.3 540.8,153 542.1,153 543.4,154.2 544.7,154.7 545.9,154.9 547.2,156.2 548.5,156.9 549.8,156.9 551.1,157.8 552.4,158.8 553.7,158.8 554.9,159.4 556.2,160.4 557.5,160.8 558.8,160.8 560.1,161.6 561.3,162.2 562.6,162.6 563.9,163.3 565.1,163.6 566.3,164.4 567.6,165.3 568.8,165.3 570,166.4 571.2,166.9 572.5,167.1 573.7,168 574.9,168.8 576.1,169.7 577.4,170.4 578.6,170.8 579.9,172.4 581.1,173.1 582.4,174 583.6,174 584.9,175.2" stroke="#ff00ff" stroke-width="2.3" stroke-linejoin="round"/><polyline points="88.4,225 90.1,209 92.2,204.7 94.3,200.6 96,199.8 97.7,198.9 99.4,199 101.5,197.1 103.6,193.9 105.3,188 107,183.8 108.7,181 110.3,178.9 112,175.3 114.2,175.8 116.3,177.8 118.3,177.1 120.2,176.3 122.2,175.3 123.9,173 125.6,172.1 127.3,171.2 129,169.4 130.7,166.8 132.3,164.7 134,161.8 135.7,158.4 137.3,155.7 139,153.4 141,150.5 143,149 144.7,149.7 146.3,151.1 148,151 150,148.7 152,146 153.5,145 155,142.8 156.5,141.9 158,140 159.7,138.3 161.3,137.6 163,137 164.7,138.1 166.3,139.1 168,139.5 169.5,138 171,136 172.5,135 174,134 175.5,132.7 177,132.1 178.5,132.3 180,131 181.5,130.7 183,132.2 184.5,132.4 186,132 187.5,129.9 189,129.3 190.5,128.2 192,127 193.5,126.3 195,127.1 196.5,128.1 198,127.5 199.8,126.2 201.5,126.4 203.2,124.9 205,125 206.8,125.3 208.5,126 210.2,124.8 212,125.5 213.6,123.9 215.2,123.4 216.8,123.5 218.4,121.8 220,122 221.6,121.7 223.2,122.8 224.8,124 226.4,123.5 228,124 229.6,123.1 231.2,122.8 232.8,121.2 234.4,121.3 236,120.5 237.7,119.7 239.3,120.2 241,120.6 242.7,118.7 244.3,119.3 246,119 247.7,119 249.3,118 251,118.4 252.7,118.6 254.3,118.5 256,118 257.6,117.6 259.1,117.7 260.7,117.6 262.2,117 263.8,117 265.3,116.4 266.9,116.4 268.4,116.3 270,116 271.5,115.9 273.1,115.9 274.6,115.4 276.2,115.4 277.7,115.6 279.2,115.4 280.8,115.2 282.3,115 283.8,115.3 285.4,114.9 286.9,114.4 288.5,114.8 290,114.5 291.5,114.2 293.1,114.2 294.6,113.9 296.2,113.9 297.7,113.6 299.2,113.3 300.8,113.5 302.3,113 303.8,113.3 305.4,112.7 306.9,113 308.5,112.8 310,112.5 311.5,112.4 313.1,112.5 314.6,112.2 316.2,112.4 317.7,112.1 319.2,111.9 320.8,112.3 322.3,111.9 323.8,111.8 325.4,112.1 326.9,111.7 328.5,111.8 330,111.5 331.5,111.8 333.1,111.4 334.6,111.2 336.2,111.7 337.7,111.1 339.2,111.5 340.8,111.5 342.3,111.2 343.8,110.8 345.4,110.7 346.9,110.8 348.5,110.8 350,110.8 351.5,110.8 353,110.9 354.5,110.5 356,110.3 357.5,110.5 359,110.2 360.5,110.1 362,110.3 363.5,110.3 365,109.9 366.5,110.1 368,110.1 369.5,110.1 371,109.8 372.5,110.1 374,109.6 375.5,109.8 377,109.8 378.5,109.8 380,109.5 381.5,109.5 383.1,109.2 384.6,109.2 386.2,109.4 387.7,109.2 389.2,109.5 390.8,109.1 392.3,109.5 393.8,109.2 395.4,109 396.9,109.1 398.5,109.2 400,109.3 401.5,109.2 403.1,109 404.6,109.2 406.2,109.4 407.7,109.2 409.2,109.4 410.8,108.8 412.3,109.4 413.8,109.3 415.4,109.1 416.9,109.1 418.5,109 420,109 421.5,109.1 423,108.4 424.5,108.6 426,108.4 427.5,108.1 429,108.2 430.5,108.1 432,107.6 433.5,107.8 435,107.5 436.5,107.5 438,107.5 439.6,107.5 441.1,107.1 442.6,107.5 444.1,107.3 445.7,107.6 447.2,107.2 448.7,107.5 450.2,107.4 451.7,107.3 453.3,107.5 454.8,106.9 456.3,107.3 457.8,107.2 459.3,107.3 460.9,107.1 462.4,106.9 463.9,106.9 465.4,107.1 467,106.9 468.5,106.8 470,107 472,110 474,113.1 476,116.5 477.8,118.1 479.5,119.8 481.2,120.8 483,123 484.8,124.3 486.5,124.8 488.2,126.3 490,127 491.8,127.3 493.5,129.3 495.2,129.7 497,130.5 498.7,132 500.3,132.9 502,133.6 503.7,133.7 505.3,134.9 507,136 508.7,136.5 510.3,138 512,138.1 513.7,139 515.3,139.7 517,141 518.6,141.3 520.2,143 521.9,143.8 523.5,143.8 525.1,145 526.8,145.5 528.4,146.3 530,147 531.7,147.5 533.3,148.5 535,148.7 536.7,149.4 538.3,150.4 540,151 541.6,151.3 543.2,152.3 544.8,153.6 546.4,153.2 548,154.5 549.5,156 551,158.5 553,158.4 555,157.5 556.7,157.8 558.3,158.9 560,160.4 561.7,161 563.3,161.3 565,162.5 566.7,162.8 568.3,163.9 570,164.8 571.7,166.2 573.3,167.2 575,167.5 576.7,169.3 578.3,171 580,172 581.6,175.2 583.3,177.8 584.9,180" stroke="#adff2f" stroke-width="1" stroke-linejoin="round"/><polyline points="88.4,225 90.1,207.4 91.8,200.7 93.5,193.9 95.2,192.1 96.9,189.7 98.6,188.1 100.2,186.3 101.9,183.8 103.6,181.5 105.3,178.7 107,168.6 108.4,166.8 109.8,163.5 111.2,161.8 113.8,163.5 115.5,162 117.2,161 118.8,159.2 120.5,157.6 121.9,157.8 123.3,156.6 124.7,156.8 126.4,154.2 128.1,151.7 130.6,152.4 132.3,150.5 134,149.1 135.7,147.4 137.4,146.2 139.1,144.3 140.7,143.3 142.4,142.3 143.8,141.6 145.2,141.9 146.7,141.3 148.1,140.3 149.5,140.5 150.9,139.8 152.6,137.7 154.3,136.5 156,134.7 158.5,129.7 160,128.8 161.5,128.1 163,128.5 164.5,127.3 166,127.1 167.8,129.7 169.5,128.3 171.2,128.1 172.8,126.9 174.5,125.4 175.9,125 177.3,125.6 178.8,125 180.2,125.1 181.6,124.4 183,124.6 184.7,125.5 186.3,125.4 188,124.1 189.7,123 191.3,121.4 193,119.5 195,118.8 196.7,119.4 198.4,120.3 200.1,121.3 201.5,121.2 202.9,121.5 204.3,121.7 205.8,122.2 207.2,122.8 208.6,123 210.3,121.8 211.9,121.9 213.6,120.9 215.3,120.4 217,120.8 218.7,121.9 220.4,122.1 222.1,121.2 223.8,120.4 225.4,121 227.1,122.1 228.8,121.5 230.5,121.1 232.2,119.7 233.9,119.6 235.4,119.8 236.9,118.5 238.4,119 239.9,118.9 241.4,118.1 242.9,118 244.4,117.6 245.9,117.4 247.4,117.1 248.9,116.8 250.4,116.6 251.9,116.5 253.4,116.5 254.9,116.1 256.4,116 257.9,115.9 259.4,115.7 260.9,115.4 262.4,115.3 263.9,115.2 265.4,115.1 266.9,115.1 268.4,114.8 269.9,114.9 271.4,114.8 272.9,114.7 274.4,114.5 275.8,114.3 277.2,114.5 278.6,114.2 280,114.2 281.4,114.2 282.9,114.2 284.3,114 285.7,114.1 287.1,113.9 288.5,113.8 289.9,113.7 291.3,113.7 292.7,113.5 294.2,113.3 295.6,113.2 297.1,113.2 298.5,113.2 299.9,112.8 301.4,112.7 302.8,112.8 304.2,112.5 305.7,112.4 307.1,112.2 308.6,112.2 310,112 311.4,112 312.9,111.9 314.3,111.8 315.7,111.7 317.1,111.8 318.6,111.6 320,111.6 321.4,111.7 322.9,111.5 324.3,111.6 325.7,111.6 327.1,111.4 328.6,111.4 330,111.2 331.4,111.2 332.9,111.1 334.3,111.2 335.7,111.1 337.1,111 338.6,111.1 340,111 341.4,111 342.9,110.8 344.3,110.8 345.7,110.8 347.1,110.7 348.6,110.6 350,110.6 351.4,110.5 352.9,110.4 354.3,110.4 355.7,110.5 357.1,110.4 358.6,110.3 360,110.2 361.4,110.1 362.9,109.9 364.3,109.9 365.7,110 367.1,109.9 368.6,109.8 370,109.8 371.4,109.7 372.9,109.7 374.3,109.6 375.7,109.5 377.1,109.4 378.6,109.4 380,109.3 381.4,109.2 382.9,109.3 384.3,109.3 385.7,109.3 387.1,109.2 388.6,109.3 390,109.2 391.4,109.2 392.9,109 394.3,109.1 395.7,109 397.1,109.1 398.6,109.1 400,109.1 401.4,109.1 402.9,109.1 404.3,109 405.7,109 407.1,109 408.6,109 410,108.9 411.4,109 412.9,109 414.3,108.9 415.7,109 417.1,108.9 418.6,108.8 420,108.8 421.5,108.7 423,108.5 424.5,108.5 426,108.4 427.5,108.2 429,108.1 430.5,108 432,107.9 433.5,107.6 435,107.6 436.5,107.7 437.9,107.6 439.4,107.6 440.8,107.5 442.3,107.5 443.7,107.6 445.2,107.5 446.6,107.5 448.1,107.3 449.5,107.4 451,107.4 452.4,107.4 453.9,107.3 455.4,107.4 456.8,107.4 458.3,107.2 459.7,107.3 461.2,107.2 462.6,107.2 464.1,107.2 465.5,107.2 467,107.2 468.4,107.1 469.9,107.2 470.8,109.5 472.5,113.8 474.1,118.8 475.8,123 477.5,127.2 479.2,129.3 480.9,131.7 482.6,133.9 484.3,135.1 485.9,136 487.6,137.3 489.3,139.3 491,140.4 492.7,142.4 494.4,142.6 496.1,142.8 497.8,143.2 499.2,144 500.7,145 502.5,146.1 504.4,148 506.2,149.1 507.8,149.4 509.4,149.5 511,150.2 512.6,150.5 514.1,150.8 515.5,151.8 517,152.2 518.5,153 519.9,153.9 521.4,154.2 522.9,155.1 524.3,155.5 525.8,156.4 527.3,156.9 528.9,157.7 530.4,158.1 532,158.6 533.5,159.6 535.1,160.2 536.6,161.2 538.2,161.5 539.7,162.7 541.3,163.4 542.8,164.1 544.3,165.4 545.9,165.7 547.4,167 548.9,167 550.5,167.6 552,168 553.5,167.9 555.1,168.6 556.6,168.8 558.2,169.9 559.7,170.3 561.3,171.1 562.8,171.8 564.4,172.6 565.9,173.8 567.5,174.3 569,174.7 570.6,175.5 572.1,175.9 573.6,176.2 575.2,176.4 576.7,177 578.5,178.9 580.4,180.1 582.2,181.6 584.9,182.5" stroke="#128a12" stroke-width=".95" stroke-linejoin="round"/><polyline points="88.4,215 88.8,200 89.6,175 90.5,160 91,140.6 91.5,126.3 92.2,118.7 93.7,115.7 95.2,113.6 97.1,111.2 98.9,108.6 101.1,117 102,111 103.6,118.7 104.9,114.7 106.2,111.1 107.5,109.7 108.7,108.2 110,105.7 111.2,104.9 112.6,105.8 114,109.1 115.4,110.3 116.7,108.2 118,106.9 119.4,108.7 120.8,112.3 122.2,113.6 123.6,111 125,109.1 126.4,106 127.8,106.8 129.2,108 130.6,108.6 131.9,107.5 133.1,108 134.4,108 135.7,106.9 137.4,108.2 139.1,109.4 140.5,109 141.9,108 143.3,106.9 145,112.8 146.7,112.4 148.4,113.6 150.1,110.3 151.7,106 153.2,104.9 154.6,103.1 156.1,101.4 157.6,101 159.3,104.2 161,106 162.7,104.3 164.4,102.7 166.1,103.9 167.8,104.3 169.2,103.9 170.6,102.5 172,101 173.7,103 175.4,103.5 176.8,102.3 178.2,102 179.6,100.5 181.3,103.6 183,106.9 184.4,106.1 185.8,104.4 187.2,102.2 188.6,101.3 190,101.9 191.4,101.9 192.7,102.8 194.1,104.8 195.4,104.5 196.8,105.3 198.1,106.2 199.3,106.2 200.6,107.2 201.8,107.8 203.5,107.1 205.2,106.9 206.9,109.2 208.6,112 210.2,110.5 211.9,108.6 213.3,109.1 214.6,110 216,109.9 217.3,110.7 218.7,110.3 220,110.5 221.2,110.3 222.5,109.3 223.8,108.6 225.4,109.3 227.1,111.2 228.4,111 229.6,110.3 230.9,109.4 232.2,107.8 233.6,109.3 235,111 236.4,112 237.9,110.4 239.4,110.5 240.8,109 242.3,107.8 244,107.8 245.7,108.6 246.9,106.2 248.2,105.3 249.5,106.2 250.7,106.7 252,105.4 253.3,106.9 254.5,106.5 255.8,106.9 257.2,105.5 258.5,105 259.9,105.2 261.2,104.6 262.6,103.2 263.9,103.3 265.1,105.3 266.4,105.2 267.6,106.9 268.9,106.9 270.1,105.8 271.4,106.4 272.7,105.3 274.1,106.4 275.5,105.8 276.9,106.1 278.3,108.4 279.7,108.6 281.1,110.3 282.5,108.9 283.8,109.1 285.2,107.4 286.5,107 287.9,106.9 289.2,106.2 290.6,106.1 291.9,104.8 293.3,104.1 294.6,104.4 296,104.6 297.3,103.2 298.6,104 300,102.7 301.3,103.7 302.6,103.9 303.8,104.6 305.1,105.3 306.4,104.8 307.6,104.4 308.9,103.8 310.1,103.2 311.4,103.3 312.7,103.3 313.9,103.6 315.2,103.2 316.5,103.1 317.8,103.4 319,103 320.3,103.2 321.6,103.4 323,104.5 324.3,104.5 325.7,104.9 327,105.3 328.4,105.7 329.8,106.9 331.2,107.8 332.5,106.2 333.8,104.4 335.1,104.6 336.5,105.9 337.8,106.6 339.2,106.7 340.5,107.8 342.2,107.1 343.9,106.1 345.1,106.9 346.4,108 347.6,108.5 348.9,109.5 350.2,108.6 351.4,107.6 352.7,105.9 354,105.3 355.3,105.1 356.6,105.9 357.8,106.3 359.1,106.1 360.4,105.2 361.6,104.6 362.9,104 364.1,103.2 365.4,102.9 366.6,102.8 367.9,102.7 369.2,102.7 370.9,103 372.6,103.6 373.9,103.3 375.1,102.6 376.4,102.2 377.6,101.9 379.1,102 380.6,101.2 382,101.6 383.5,101.4 384.8,102 386,102 387.3,102.3 388.6,103.1 389.8,103 391.1,103.6 392.4,103.2 393.6,103.3 394.9,103.5 396.2,103.2 397.6,103.3 398.9,103.9 400.3,104.3 401.6,105.2 403,105.3 404.4,105.8 405.8,106.7 407.2,106.7 408.6,107.4 410,108.2 411.4,108.6 412.8,108.5 414.1,107.7 415.4,107.1 416.8,106.9 418.1,106.2 419.3,106.3 420.6,105.7 421.9,105.9 423.1,105.6 424.4,104.7 425.6,104.5 426.9,104.4 428.2,104.2 429.6,103.7 430.9,103.4 432.2,102.5 433.5,101.9 434.9,101.6 436.2,101.4 437.5,101.7 438.8,101.3 440.1,101.5 441.5,101.6 442.8,101.7 444.1,101.7 445.4,101.9 446.8,102.4 448.1,101.9 449.4,101.8 450.8,102.8 452.1,102.9 453.5,103.1 454.8,102.8 456.2,103.3 457.5,103.5 458.9,103.2 460.3,103.9 461.8,105.4 463.2,106.1 464.9,105 466.5,103.2 468.2,104.8 469.9,106.1 471.6,118.8 473.3,144 474.2,163.3 476,178 477.5,182 479.1,185.5 480.6,189.9 482.4,184.4 484.2,178.9 485.6,180.7 487,183.5 488.4,182.2 489.8,182.7 491.1,181.6 492.5,181.6 494,184.4 495.5,185 497,188 498.5,187.6 500.1,186 501.6,184.4 503,183.6 504.4,182 505.7,180.4 507.1,178 509,179.5 510.8,180.7 512.2,180 513.5,181.6 514.9,180.7 516.3,181.6 517.7,181.7 519,182.9 520.4,183.1 521.8,183.5 523.1,184.4 524.4,186.5 525.6,187 526.9,187.5 528.2,188.9 529.6,187.5 531,187.8 532.3,186.2 533.7,185.3 535.1,185.9 536.5,185 537.8,184.7 539.2,185.3 541,190.8 542.8,196.3 544.2,199.2 545.6,200.8 547.4,199.7 549.2,199.9 550.6,202.1 552,203.9 553.3,205.3 554.7,206.3 556.1,203.3 557.5,199 558.8,199.3 560.1,201.8 561.3,203.6 562.6,203.2 563.9,205.4 565.2,204.6 566.5,204.2 567.7,204.4 569,203.8 570.3,203.6 571.8,203.2 573.4,203.6 574.9,202.7 576.2,204 577.6,207.3 580,217.3 581.6,215.5 583.3,214.8 584.9,214.6" stroke="#008686" stroke-width="1" stroke-linejoin="round"/></svg>
<div class="t" style="right:632.5px;top:122.7px;font-size:4.9px;line-height:8px;color:#111;font-weight:bold;">150</div>
<div class="t" style="right:632.5px;top:163.2px;font-size:4.9px;line-height:8px;color:#111;font-weight:bold;">100</div>
<div class="t" style="right:632.5px;top:203.8px;font-size:4.9px;line-height:8px;color:#111;font-weight:bold;">50</div>
<div class="t" style="right:632.5px;top:242.5px;font-size:4.9px;line-height:8px;color:#111;font-weight:bold;">0</div>
<div class="t" style="left:68.8px;top:169.3px;width:0;height:0;"><div style="position:absolute;white-space:nowrap;transform:translate(-50%,-50%) rotate(-90deg);font-size:4.5px;line-height:7px;font-weight:bold;color:#111">温度(℃)</div></div>
<div class="t" style="left:336.5px;width:0;display:flex;justify-content:center;top:227.8px;font-size:4.8px;line-height:8px;color:#111;font-weight:bold;"><span style="white-space:nowrap;flex:none">斜率1</span></div>
<div class="t" style="left:88.35px;width:0;display:flex;justify-content:center;top:253.5px;font-size:5.27px;line-height:8px;color:#111;font-weight:bold;font-family:'Liberation Mono',monospace;"><span style="white-space:nowrap;flex:none">00:00:00</span></div>
<div class="t" style="left:193.95px;width:0;display:flex;justify-content:center;top:253.5px;font-size:5.27px;line-height:8px;color:#111;font-weight:bold;font-family:'Liberation Mono',monospace;"><span style="white-space:nowrap;flex:none">00:15:00</span></div>
<div class="t" style="left:299.55px;width:0;display:flex;justify-content:center;top:253.5px;font-size:5.27px;line-height:8px;color:#111;font-weight:bold;font-family:'Liberation Mono',monospace;"><span style="white-space:nowrap;flex:none">00:30:00</span></div>
<div class="t" style="left:405.15px;width:0;display:flex;justify-content:center;top:253.5px;font-size:5.27px;line-height:8px;color:#111;font-weight:bold;font-family:'Liberation Mono',monospace;"><span style="white-space:nowrap;flex:none">00:45:00</span></div>
<div class="t" style="left:510.75px;width:0;display:flex;justify-content:center;top:253.5px;font-size:5.27px;line-height:8px;color:#111;font-weight:bold;font-family:'Liberation Mono',monospace;"><span style="white-space:nowrap;flex:none">01:00:00</span></div>
<div class="t" style="left:336px;width:0;display:flex;justify-content:center;top:259px;font-size:5.2px;line-height:8px;color:#111;font-weight:bold;"><span style="white-space:nowrap;flex:none">时间 H:M:S</span></div>
<div class="t" style="left:158.73px;width:0;display:flex;justify-content:center;top:270.4px;font-size:5.3px;line-height:8px;color:#111;font-weight:bold;"><span style="white-space:nowrap;flex:none">10</span></div>
<div class="t" style="left:229.11px;width:0;display:flex;justify-content:center;top:270.4px;font-size:5.3px;line-height:8px;color:#111;font-weight:bold;"><span style="white-space:nowrap;flex:none">20</span></div>
<div class="t" style="left:299.49px;width:0;display:flex;justify-content:center;top:270.4px;font-size:5.3px;line-height:8px;color:#111;font-weight:bold;"><span style="white-space:nowrap;flex:none">30</span></div>
<div class="t" style="left:369.87px;width:0;display:flex;justify-content:center;top:270.4px;font-size:5.3px;line-height:8px;color:#111;font-weight:bold;"><span style="white-space:nowrap;flex:none">40</span></div>
<div class="t" style="left:440.25px;width:0;display:flex;justify-content:center;top:270.4px;font-size:5.3px;line-height:8px;color:#111;font-weight:bold;"><span style="white-space:nowrap;flex:none">50</span></div>
<div class="t" style="left:510.63px;width:0;display:flex;justify-content:center;top:270.4px;font-size:5.3px;line-height:8px;color:#111;font-weight:bold;"><span style="white-space:nowrap;flex:none">60</span></div>
<div class="t" style="left:581.2px;width:0;display:flex;justify-content:center;top:270.4px;font-size:5.3px;line-height:8px;color:#111;font-weight:bold;"><span style="white-space:nowrap;flex:none">70</span></div>
<div class="t" style="left:336.6px;width:0;display:flex;justify-content:center;top:276.8px;font-size:5.1px;line-height:8px;color:#111;font-weight:bold;"><span style="white-space:nowrap;flex:none">面板 *</span></div>
<div style="position:absolute;left:83.1px;top:270.5px;width:9.8px;height:10.1px;background:#fff;border:0.8px solid #2a2af0;box-sizing:border-box;"></div>
<div class="t" style="left:88px;width:0;display:flex;justify-content:center;top:271.7px;font-size:5.3px;line-height:8px;color:#000;font-weight:normal;"><span style="white-space:nowrap;flex:none">0&#46;0</span></div>
<div style="position:absolute;left:579.2px;top:247px;width:12.5px;height:10.5px;background:#fff;border:0.8px solid #2a2af0;box-sizing:border-box;"></div>
<div class="t" style="left:585.45px;width:0;display:flex;justify-content:center;top:248.4px;font-size:5px;line-height:8px;color:#444;font-weight:normal;"><span style="white-space:nowrap;flex:none">-6.9</span></div>
<div style="position:absolute;left:597.7px;top:55.2px;width:114.3px;height:231.3px;background:#fff;"></div>
<div style="position:absolute;left:597.4px;top:58px;width:31.2px;height:226.5px;background:#fff;border:0.7px solid #8f949c;box-sizing:border-box;"></div>
<div style="position:absolute;left:629.5px;top:58.5px;width:82px;height:4px;background:#f4f5f7;"></div>
<svg width="717" height="415" viewBox="0 0 717 415"><rect x="606.5" y="61.7" width="12.8" height="11" fill="none" stroke="#2467e8" stroke-width="1"/><path d="M608.5 69.9l3.2-3 2 1.2 3-3.4" stroke="#2467e8" stroke-width=".9" fill="none"/><circle cx="616.9" cy="64.7" r="1.2" fill="#fff" stroke="#2467e8" stroke-width=".8"/><path d="M612.9 72.7v1.6M606.9 74.5h12" stroke="#2467e8" stroke-width="1"/><path d="M607 100.5V88h11.6v5" fill="none" stroke="#2467e8" stroke-width="1"/><path d="M607 91.5h11.6" stroke="#2467e8" stroke-width=".9"/><path d="M608.5 94.9h5" stroke="#2467e8" stroke-width=".8" stroke-dasharray="1.4 .8"/><path d="M607 100.5h6" stroke="#2467e8" stroke-width=".9"/><path d="M613.9 94.5l5.6 1.8-2.4 1 2 2.2-1 .9-2-2.3-1.2 2.2z" fill="#2467e8"/><path d="M607 126V113.5h11.6v4" fill="none" stroke="#2467e8" stroke-width="1"/><path d="M610.7 113.5v12.5M614.5 113.5v5" stroke="#2467e8" stroke-width=".9"/><path d="M607 126h6" stroke="#2467e8" stroke-width=".9"/><path d="M613.9 120l5.6 1.8-2.4 1 2 2.2-1 .9-2-2.3-1.2 2.2z" fill="#2467e8"/><path d="M607 151.5V139h11.6v4" fill="none" stroke="#2467e8" stroke-width="1"/><path d="M610.7 139v12.5M614.5 139v5" stroke="#2467e8" stroke-width=".9"/><path d="M607 151.5h6" stroke="#2467e8" stroke-width=".9"/><path d="M613.9 145.5l5.6 1.8-2.4 1 2 2.2-1 .9-2-2.3-1.2 2.2z" fill="#2467e8"/><path d="M607 176.5V164h11.6v5" fill="none" stroke="#2467e8" stroke-width="1"/><path d="M607 167.5h11.6" stroke="#2467e8" stroke-width=".9"/><path d="M608.5 170.9h5" stroke="#2467e8" stroke-width=".8" stroke-dasharray="1.4 .8"/><path d="M607 176.5h6" stroke="#2467e8" stroke-width=".9"/><path d="M613.9 170.5l5.6 1.8-2.4 1 2 2.2-1 .9-2-2.3-1.2 2.2z" fill="#2467e8"/><circle cx="612.9" cy="194.2" r="7" fill="#d9d9d9"/><path d="M609.8 194.4l2.2 2.2 4-4.2" stroke="#b5b5b5" stroke-width="1.1" fill="none"/><path d="M607 226.5V214h11.6v5" fill="none" stroke="#2467e8" stroke-width="1"/><path d="M607 217.5h11.6" stroke="#2467e8" stroke-width=".9"/><path d="M608.5 220.9h5" stroke="#2467e8" stroke-width=".8" stroke-dasharray="1.4 .8"/><path d="M607 226.5h6" stroke="#2467e8" stroke-width=".9"/><path d="M613.9 220.5l5.6 1.8-2.4 1 2 2.2-1 .9-2-2.3-1.2 2.2z" fill="#2467e8"/></svg>
<div class="t" style="left:612.9px;width:0;display:flex;justify-content:center;top:76.3px;font-size:5px;line-height:8px;color:#111;font-weight:bold;"><span style="white-space:nowrap;flex:none">标准曲线</span></div>
<div class="t" style="left:612.9px;width:0;display:flex;justify-content:center;top:102.3px;font-size:5px;line-height:8px;color:#111;font-weight:bold;"><span style="white-space:nowrap;flex:none">选择线</span></div>
<div class="t" style="left:612.9px;width:0;display:flex;justify-content:center;top:127.8px;font-size:5px;line-height:8px;color:#111;font-weight:bold;"><span style="white-space:nowrap;flex:none">移动曲线</span></div>
<div class="t" style="left:612.9px;width:0;display:flex;justify-content:center;top:153px;font-size:5px;line-height:8px;color:#111;font-weight:bold;"><span style="white-space:nowrap;flex:none">重合曲线</span></div>
<div class="t" style="left:612.9px;width:0;display:flex;justify-content:center;top:178.3px;font-size:5px;line-height:8px;color:#111;font-weight:bold;"><span style="white-space:nowrap;flex:none">显示温区</span></div>
<div class="t" style="left:612.9px;width:0;display:flex;justify-content:center;top:201.6px;font-size:5px;line-height:8px;color:#111;font-weight:bold;"><span style="white-space:nowrap;flex:none">显示斜率</span></div>
<div class="t" style="left:612.9px;width:0;display:flex;justify-content:center;top:228.3px;font-size:5px;line-height:8px;color:#111;font-weight:bold;"><span style="white-space:nowrap;flex:none">刷新</span></div>
<svg width="717" height="415" viewBox="0 0 717 415" fill="none"><path d="M644.2 72h7.4" stroke="#ff22ee" stroke-width=".7"/><circle cx="647.9" cy="72" r="2.1" fill="#fff" stroke="#ff22ee" stroke-width=".7"/><path d="M702.2 72q3.3-3.3 6.6 0q-3.3 3.3-6.6 0z" fill="#eaf2fd" stroke="#4f95ea" stroke-width=".8"/><circle cx="705.5" cy="72" r="1.15" fill="#fff" stroke="#4f95ea" stroke-width=".8"/><path d="M644.2 81.6h7.4" stroke="#b6f24a" stroke-width=".7"/><circle cx="647.9" cy="81.6" r="2.1" fill="#fff" stroke="#b6f24a" stroke-width=".7"/><path d="M702.2 81.6q3.3-3.3 6.6 0q-3.3 3.3-6.6 0z" fill="#eaf2fd" stroke="#4f95ea" stroke-width=".8"/><circle cx="705.5" cy="81.6" r="1.15" fill="#fff" stroke="#4f95ea" stroke-width=".8"/><path d="M644.2 91.2h7.4" stroke="#1f8c1f" stroke-width=".7"/><circle cx="647.9" cy="91.2" r="2.1" fill="#fff" stroke="#1f8c1f" stroke-width=".7"/><path d="M702.2 91.2q3.3-3.3 6.6 0q-3.3 3.3-6.6 0z" fill="#eaf2fd" stroke="#4f95ea" stroke-width=".8"/><circle cx="705.5" cy="91.2" r="1.15" fill="#fff" stroke="#4f95ea" stroke-width=".8"/><path d="M644.2 100.9h7.4" stroke="#189090" stroke-width=".7"/><circle cx="647.9" cy="100.9" r="2.1" fill="#fff" stroke="#189090" stroke-width=".7"/><path d="M702.2 100.9q3.3-3.3 6.6 0q-3.3 3.3-6.6 0z" fill="#eaf2fd" stroke="#4f95ea" stroke-width=".8"/><circle cx="705.5" cy="100.9" r="1.15" fill="#fff" stroke="#4f95ea" stroke-width=".8"/><path d="M644.2 110.5h7.4" stroke="#2f8cf0" stroke-width=".7"/><circle cx="647.9" cy="110.5" r="2.1" fill="#fff" stroke="#2f8cf0" stroke-width=".7"/><path d="M702.3 110.5q3.2-3.2 6.4 0q-3.2 3.2-6.4 0z" stroke="#cf96d6" stroke-width=".8"/><path d="M703.9 113.1l3.6-5" stroke="#cf96d6" stroke-width=".8"/><path d="M644.2 120.1h7.4" stroke="#22d822" stroke-width=".7"/><circle cx="647.9" cy="120.1" r="2.1" fill="#fff" stroke="#22d822" stroke-width=".7"/><path d="M702.3 120.1q3.2-3.2 6.4 0q-3.2 3.2-6.4 0z" stroke="#cf96d6" stroke-width=".8"/><path d="M703.9 122.7l3.6-5" stroke="#cf96d6" stroke-width=".8"/><path d="M631.2 69.6v-2.3h8.8v9h-8.8v-2.3" stroke="#222" stroke-width=".8" stroke-dasharray="6.5 1.4 5.5 1.4 8 1.4 5 0"/></svg>
<div class="t" style="left:632.3px;top:68px;font-size:5.4px;line-height:8px;color:#333;font-weight:normal;">1</div>
<div class="t" style="left:656.8px;top:68px;font-size:5.65px;line-height:8px;color:#000;font-weight:normal;">Port1</div>
<div class="t" style="left:632.3px;top:77.62px;font-size:5.4px;line-height:8px;color:#333;font-weight:normal;">2</div>
<div class="t" style="left:656.8px;top:77.62px;font-size:5.65px;line-height:8px;color:#000;font-weight:normal;">Port2</div>
<div class="t" style="left:632.3px;top:87.24px;font-size:5.4px;line-height:8px;color:#333;font-weight:normal;">3</div>
<div class="t" style="left:656.8px;top:87.24px;font-size:5.65px;line-height:8px;color:#000;font-weight:normal;">Port3</div>
<div class="t" style="left:632.3px;top:96.86px;font-size:5.4px;line-height:8px;color:#333;font-weight:normal;">4</div>
<div class="t" style="left:656.8px;top:96.86px;font-size:5.65px;line-height:8px;color:#000;font-weight:normal;">Port4</div>
<div class="t" style="left:632.3px;top:106.48px;font-size:5.4px;line-height:8px;color:#333;font-weight:normal;">5</div>
<div class="t" style="left:656.8px;top:106.48px;font-size:5.65px;line-height:8px;color:#000;font-weight:normal;">Port5</div>
<div class="t" style="left:632.3px;top:116.1px;font-size:5.4px;line-height:8px;color:#333;font-weight:normal;">6</div>
<div class="t" style="left:656.8px;top:116.1px;font-size:5.65px;line-height:8px;color:#000;font-weight:normal;">Port6</div>
<div style="position:absolute;left:61.7px;top:300.2px;width:542px;height:107.2px;background:#fff;border:0.7px solid;border-color:#c9ccd2 #c9ccd2 #9b9fa6 #9b9fa6;box-sizing:border-box;"></div>
<div style="position:absolute;left:62.1px;top:290.9px;width:23px;height:10px;background:#fff;border:0.7px solid #c3c7cd;border-bottom:none;box-sizing:border-box;"></div>
<div class="t" style="left:73.6px;width:0;display:flex;justify-content:center;top:292px;font-size:5.3px;line-height:8px;color:#000;font-weight:normal;"><span style="white-space:nowrap;flex:none">数据</span></div>
<div style="position:absolute;left:85.5px;top:291.6px;width:30.4px;height:8.8px;background:#f1f2f4;border:0.7px solid #b4b8bf;border-bottom:none;box-sizing:border-box;"></div>
<div class="t" style="left:100.7px;width:0;display:flex;justify-content:center;top:292px;font-size:5.3px;line-height:8px;color:#000;font-weight:normal;"><span style="white-space:nowrap;flex:none">设备信息</span></div>
<div style="position:absolute;left:116.6px;top:291.6px;width:36.4px;height:8.8px;background:#f1f2f4;border:0.7px solid #b4b8bf;border-bottom:none;box-sizing:border-box;"></div>
<div class="t" style="left:134.8px;width:0;display:flex;justify-content:center;top:292px;font-size:5.3px;line-height:8px;color:#000;font-weight:normal;"><span style="white-space:nowrap;flex:none">工艺控制结果</span></div>
<div style="position:absolute;left:153.6px;top:291.6px;width:35.4px;height:8.8px;background:#f1f2f4;border:0.7px solid #b4b8bf;border-bottom:none;box-sizing:border-box;"></div>
<div class="t" style="left:171.3px;width:0;display:flex;justify-content:center;top:292px;font-size:5.3px;line-height:8px;color:#000;font-weight:normal;"><span style="white-space:nowrap;flex:none">预控制结果</span></div>
<svg width="717" height="415" viewBox="0 0 717 415" fill="none" stroke="#dcdfe4" stroke-width=".7"><path d="M79.5 300.6V352.6"/><path d="M123.4 300.6V352.6"/><path d="M167.3 300.6V352.6"/><path d="M211.3 300.6V352.6"/><path d="M255.6 300.6V352.6"/><path d="M62.1 317.4H255.6"/><path d="M62.1 326.4H255.6"/><path d="M62.1 335.3H255.6"/><path d="M62.1 344.1H255.6"/><path d="M62.1 352.6H255.6"/><path d="M123.4 308.8H255.6"/></svg>
<div class="t" style="left:63.6px;top:305px;font-size:5.2px;line-height:8px;color:#1d2350;font-weight:normal;-webkit-text-stroke:.1px #1d2350;">序号</div>
<div class="t" style="left:81.2px;top:305px;font-size:5.3px;line-height:8px;color:#1d2350;font-weight:bold;">通道名称</div>
<div class="t" style="left:145.35px;width:0;display:flex;justify-content:center;top:300.8px;font-size:5.2px;line-height:8px;color:#1d2350;font-weight:normal;-webkit-text-stroke:.12px #1d2350;"><span style="white-space:nowrap;flex:none">上升时间(S)</span></div>
<div class="t" style="left:145.35px;width:0;display:flex;justify-content:center;top:309.4px;font-size:5.3px;line-height:8px;color:#2a3060;font-weight:normal;"><span style="white-space:nowrap;flex:none">30 -> 200 (C)</span></div>
<div class="t" style="left:189.3px;width:0;display:flex;justify-content:center;top:300.8px;font-size:5.2px;line-height:8px;color:#1d2350;font-weight:normal;-webkit-text-stroke:.12px #1d2350;"><span style="white-space:nowrap;flex:none">以上时间(S)</span></div>
<div class="t" style="left:189.3px;width:0;display:flex;justify-content:center;top:309.4px;font-size:5.3px;line-height:8px;color:#2a3060;font-weight:normal;"><span style="white-space:nowrap;flex:none">200 (C)</span></div>
<div class="t" style="left:233.45px;width:0;display:flex;justify-content:center;top:300.8px;font-size:5.2px;line-height:8px;color:#1d2350;font-weight:normal;-webkit-text-stroke:.12px #1d2350;"><span style="white-space:nowrap;flex:none">温度之间时间(S)</span></div>
<div class="t" style="left:233.45px;width:0;display:flex;justify-content:center;top:309.4px;font-size:5.3px;line-height:8px;color:#2a3060;font-weight:normal;"><span style="white-space:nowrap;flex:none">50 -> 100 (C)</span></div>
<div class="t" style="left:63.6px;top:318.1px;font-size:5.4px;line-height:8px;color:#111;font-weight:normal;">1</div>
<div class="t" style="left:81.2px;top:318.1px;font-size:5.4px;line-height:8px;color:#111;font-weight:bold;">通道 1</div>
<div class="t" style="left:145.35px;width:0;display:flex;justify-content:center;top:318.1px;font-size:5.4px;line-height:8px;color:#000;font-weight:normal;"><span style="white-space:nowrap;flex:none">00:50:26</span></div>
<div class="t" style="left:189.3px;width:0;display:flex;justify-content:center;top:318.1px;font-size:5.4px;line-height:8px;color:#000;font-weight:normal;"><span style="white-space:nowrap;flex:none">-</span></div>
<div class="t" style="left:233.45px;width:0;display:flex;justify-content:center;top:318.1px;font-size:5.4px;line-height:8px;color:#000;font-weight:normal;"><span style="white-space:nowrap;flex:none">-</span></div>
<div class="t" style="left:63.6px;top:326.55px;font-size:5.4px;line-height:8px;color:#111;font-weight:normal;">2</div>
<div class="t" style="left:81.2px;top:326.55px;font-size:5.4px;line-height:8px;color:#111;font-weight:bold;">通道 2</div>
<div class="t" style="left:145.35px;width:0;display:flex;justify-content:center;top:326.55px;font-size:5.4px;line-height:8px;color:#000;font-weight:normal;"><span style="white-space:nowrap;flex:none">00:49:17</span></div>
<div class="t" style="left:189.3px;width:0;display:flex;justify-content:center;top:326.55px;font-size:5.4px;line-height:8px;color:#aaa;font-weight:normal;"><span style="white-space:nowrap;flex:none">-</span></div>
<div class="t" style="left:233.45px;width:0;display:flex;justify-content:center;top:326.55px;font-size:5.4px;line-height:8px;color:#000;font-weight:normal;"><span style="white-space:nowrap;flex:none">00:07:01</span></div>
<div class="t" style="left:63.6px;top:335.4px;font-size:5.4px;line-height:8px;color:#111;font-weight:normal;">3</div>
<div class="t" style="left:81.2px;top:335.4px;font-size:5.4px;line-height:8px;color:#111;font-weight:bold;">通道 3</div>
<div class="t" style="left:145.35px;width:0;display:flex;justify-content:center;top:335.4px;font-size:5.4px;line-height:8px;color:#000;font-weight:normal;"><span style="white-space:nowrap;flex:none">00:49:37</span></div>
<div class="t" style="left:63.6px;top:344.05px;font-size:5.4px;line-height:8px;color:#111;font-weight:normal;">4</div>
<div class="t" style="left:81.2px;top:344.05px;font-size:5.4px;line-height:8px;color:#111;font-weight:bold;">通道 4</div>
<div class="t" style="left:145.35px;width:0;display:flex;justify-content:center;top:344.05px;font-size:5.4px;line-height:8px;color:#000;font-weight:normal;"><span style="white-space:nowrap;flex:none">00:13:00</span></div>
<div class="t" style="left:189.3px;width:0;display:flex;justify-content:center;top:344.05px;font-size:5.4px;line-height:8px;color:#000;font-weight:normal;"><span style="white-space:nowrap;flex:none">-</span></div>
<div class="t" style="left:233.45px;width:0;display:flex;justify-content:center;top:344.05px;font-size:5.4px;line-height:8px;color:#000;font-weight:normal;"><span style="white-space:nowrap;flex:none">-</span></div>
<div style="position:absolute;left:604.3px;top:299.8px;width:107.2px;height:108.2px;background:#fff;border-top:0.6px solid #d4d8de;box-sizing:border-box;"></div>
<div style="position:absolute;left:605.3px;top:301.6px;width:105.4px;height:79.2px;background:linear-gradient(90deg,#1a64e8,#1f70f2 45%,#1a68ea);"></div>
<div class="t" style="left:629.3px;top:326.3px;width:57px;height:16px;"><div id="ptitle" style="position:absolute;left:0;top:0;white-space:nowrap;font-size:13px;line-height:16px;font-weight:bold;color:#fff;transform-origin:0 0;transform:scaleX(.532);"><span style="font-size:9.5px;letter-spacing:-1.2px">三</span>RSM<span style="font-size:9.5px;letter-spacing:-1.2px">三</span>&nbsp;·&nbsp;S60K-W</div></div>
<svg width="717" height="415" viewBox="0 0 717 415"><rect x="610.8" y="315.4" width="6.2" height="3.8" rx="1" fill="#e6eeff"/><rect x="612.6" y="316.5" width="2.6" height="1.6" fill="#2a62d8"/><circle cx="621" cy="317.3" r=".9" fill="#8a2c90"/><rect x="610.8" y="326" width="6.2" height="3.8" rx="1" fill="#e6eeff"/><rect x="612.6" y="327.1" width="2.6" height="1.6" fill="#2a62d8"/><circle cx="621" cy="327.9" r=".9" fill="#8a2c90"/><rect x="610.8" y="336.4" width="6.2" height="3.8" rx="1" fill="#e6eeff"/><rect x="612.6" y="337.5" width="2.6" height="1.6" fill="#2a62d8"/><circle cx="621" cy="338.3" r=".9" fill="#8a2c90"/><rect x="610.8" y="346.2" width="6.2" height="3.8" rx="1" fill="#e6eeff"/><rect x="612.6" y="347.3" width="2.6" height="1.6" fill="#2a62d8"/><circle cx="621" cy="348.1" r=".9" fill="#8a2c90"/><path d="M610 372.6l4.1-13 4.1 13z" fill="#dfe8fb" stroke="#f4f7ff" stroke-width=".6"/><path d="M612.4 367h3.4M611.6 370h5" stroke="#2a55b8" stroke-width=".8"/><circle cx="614.1" cy="363.6" r=".9" fill="#2a55b8"/><rect x="610" y="375.5" width="9" height=".9" fill="#a9c2f8"/><ellipse cx="632.5" cy="362.6" rx="3.7" ry="5.3" fill="#1a4fc4"/><ellipse cx="632.5" cy="362.6" rx="2.9" ry="4.4" fill="#e4e9fb"/><ellipse cx="632.5" cy="362.6" rx="1.5" ry="3.1" fill="#7a4ec0"/><ellipse cx="645.5" cy="362.6" rx="3.7" ry="5.3" fill="#1a4fc4"/><ellipse cx="645.5" cy="362.6" rx="2.9" ry="4.4" fill="#e4e9fb"/><ellipse cx="645.5" cy="362.6" rx="1.5" ry="3.1" fill="#7a4ec0"/><rect x="666.7" y="359.3" width="35" height="1.4" fill="#d5e3ff"/><rect x="666.7" y="364.7" width="29" height="1.4" fill="#d5e3ff"/><circle cx="708.4" cy="337.3" r="3.1" fill="#3fe04a"/><circle cx="708.4" cy="351.8" r="3.1" fill="#1f8a24"/><rect x="710.7" y="301.6" width="1.5" height="80" fill="#fff"/><circle cx="693.5" cy="345.8" r=".8" fill="#d98a3a"/><circle cx="708.6" cy="315" r="1" fill="none" stroke="#dfe8ff" stroke-width=".5"/><circle cx="708.6" cy="325.5" r="1" fill="none" stroke="#dfe8ff" stroke-width=".5"/><circle cx="708.6" cy="345.8" r="1" fill="none" stroke="#dfe8ff" stroke-width=".5"/><circle cx="708.6" cy="357" r="1" fill="none" stroke="#dfe8ff" stroke-width=".5"/><circle cx="708.6" cy="367.3" r="1" fill="none" stroke="#dfe8ff" stroke-width=".5"/></svg>
<div class="t" style="left:651px;top:358.8px;font-size:4.8px;line-height:8px;color:#c9d6fa;font-weight:normal;">RSM</div>
<div class="t" style="left:631px;top:373.3px;font-size:3.2px;line-height:4px;color:#d5e0ff;font-weight:normal;">开</div>
<div class="t" style="left:642px;top:373.3px;font-size:3.2px;line-height:4px;color:#d5e0ff;font-weight:normal;">Reflow</div>
<div class="t" style="left:655.7px;width:0;display:flex;justify-content:center;top:391.6px;font-size:7.4px;line-height:9px;color:#111;font-weight:normal;font-family:'Liberation Serif','Noto Serif CJK SC',serif;font-style:italic;transform:scaleX(.82);"><span style="white-space:nowrap;flex:none">RSM 温度分析系统</span></div>
<div style="position:absolute;left:0px;top:413.3px;width:717px;height:1.7px;background:#2b90f8;"></div>
</body></html>
